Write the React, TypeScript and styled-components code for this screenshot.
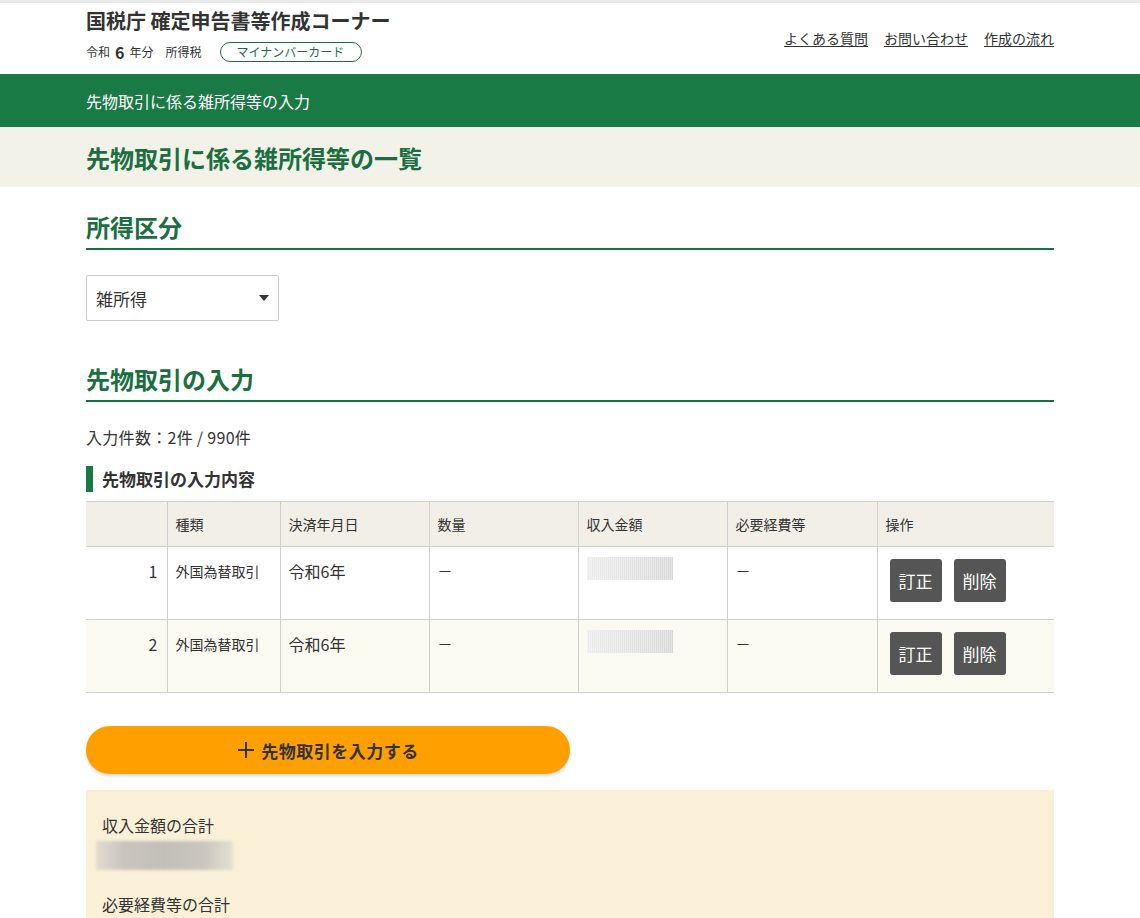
import styled, { createGlobalStyle } from "styled-components";

const Global = createGlobalStyle`
  html, body {
    margin: 0;
    padding: 0;
    background: #fff;
    color: #333;
    font-family: "Noto Sans CJK JP", "Noto Sans", sans-serif;
  }
`;

const Inner = styled.div`
  width: 968px;
  margin: 0 auto;
`;

const Header = styled.header`
  border-top: 3px solid #e8e8e8;
  height: 71px;
`;

const HeaderRow = styled(Inner)`
  display: flex;
  justify-content: space-between;
  align-items: flex-start;
`;

const Brand = styled.div`
  padding-top: 6px;
`;

const SiteTitle = styled.h1`
  margin: 0;
  font-size: 20px;
  line-height: 24px;
  font-weight: 700;
  color: #333;
`;

const Meta = styled.div`
  display: flex;
  align-items: center;
  margin-top: 9px;
  font-size: 12px;
  line-height: 20px;
`;

const Year = styled.span`
  font-size: 16px;
  font-weight: 700;
  margin: 0 5px;
`;

const Tax = styled.span`
  margin-left: 12px;
`;

const Pill = styled.span`
  margin-left: 18px;
  display: inline-block;
  width: 140px;
  height: 18px;
  line-height: 18px;
  border: 1px solid #1b6e42;
  border-radius: 10px;
  text-align: center;
  color: #1b6e42;
  font-size: 12px;
`;

const Links = styled.nav`
  display: flex;
  gap: 16px;
  padding-top: 25px;
`;

const Link = styled.a`
  color: #333;
  font-size: 14px;
  line-height: 20px;
  text-decoration: underline;
  text-underline-offset: 2px;
`;

const GreenBar = styled.div`
  background: #1a7a46;
  height: 53px;
  color: #fff;
  font-size: 16px;
  display: flex;
  align-items: center;
`;

const PageBand = styled.div`
  background: #f3f2e9;
  height: 60px;
  display: flex;
  align-items: center;
`;

const PageTitle = styled.h2`
  margin: 0;
  font-size: 24px;
  font-weight: 700;
  color: #1a6e40;
`;

const Section = styled.section`
  padding-top: ${(p: { $top: number }) => p.$top}px;
`;

const SectionTitle = styled.h3`
  margin: 0;
  font-size: 24px;
  font-weight: 700;
  color: #1a6e40;
  line-height: 28px;
  padding-bottom: 7px;
  border-bottom: 2px solid #1a6e40;
`;

const Select = styled.div`
  margin-top: 25px;
  width: 193px;
  height: 46px;
  box-sizing: border-box;
  border: 1px solid #ccc;
  border-radius: 2px;
  display: flex;
  align-items: center;
  justify-content: space-between;
  padding: 0 9px 0 9px;
  font-size: 17px;
  color: #333;
`;

const Caret = styled.span`
  width: 0;
  height: 0;
  border-left: 5px solid transparent;
  border-right: 5px solid transparent;
  border-top: 6px solid #333;
`;

const Count = styled.p`
  margin: 24px 0 0;
  font-size: 16px;
  line-height: 22px;
  letter-spacing: 0.3px;
`;

const SubTitle = styled.h4`
  margin: 18px 0 0;
  border-left: 7px solid #1a7a46;
  padding-left: 9px;
  font-size: 17px;
  font-weight: 700;
  line-height: 26px;
`;

const Table = styled.table`
  margin-top: 9px;
  width: 968px;
  border-collapse: collapse;
  font-size: 14px;
`;

const Th = styled.th<{ $w: number }>`
  width: ${(p) => p.$w}px;
  height: 45px;
  background: #f1efe6;
  border: 1px solid #cfcfcf;
  border-left: ${(p) => (p.$w === 81 ? "none" : "1px solid #cfcfcf")};
  border-right: ${(p) => (p.$w === 177 ? "none" : "1px solid #cfcfcf")};
  text-align: left;
  font-weight: 400;
  padding: 0 8px;
  box-sizing: border-box;
`;

const Tr = styled.tr<{ $alt?: boolean }>`
  background: ${(p) => (p.$alt ? "#fbfaf1" : "#fff")};
`;

const Td = styled.td<{ $size?: number; $right?: boolean }>`
  height: 59px;
  border: 1px solid #cfcfcf;
  vertical-align: top;
  padding: 13px 8px 0;
  font-size: ${(p) => p.$size ?? 14}px;
  text-align: ${(p) => (p.$right ? "right" : "left")};
  line-height: 22px;
  &:first-child {
    border-left: none;
    padding-right: 9px;
  }
  &:last-child {
    border-right: none;
    padding: 12px 12px 0;
  }
`;

const Masked = styled.div`
  width: 86px;
  height: 23px;
  margin-top: -3px;
  background:
    repeating-linear-gradient(90deg, rgba(255,255,255,0.35) 0 1px, transparent 1px 2px),
    linear-gradient(90deg, #ececec, #e1e1e1 60%, #d8d8d8);
`;

const Actions = styled.div`
  display: flex;
  gap: 12px;
`;

const ActionBtn = styled.button`
  width: 52px;
  height: 43px;
  border: none;
  border-radius: 3px;
  background: #555;
  color: #fff;
  font-family: inherit;
  font-size: 17px;
  padding: 0;
`;

const AddButton = styled.button`
  margin-top: 33px;
  width: 484px;
  height: 48px;
  border: none;
  border-radius: 24px;
  background: #ff9f00;
  box-shadow: 0 2px 3px rgba(0, 0, 0, 0.15);
  color: #333;
  font-family: inherit;
  font-size: 17px;
  font-weight: 700;
  letter-spacing: 0.5px;
  display: flex;
  align-items: center;
  justify-content: center;
  gap: 6px;
`;

const Summary = styled.div`
  margin-top: 16px;
  background: #faf0d7;
  padding: 24px 16px 0;
  height: 200px;
  box-sizing: border-box;
`;

const SumLabel = styled.div`
  font-size: 16px;
  line-height: 22px;
  margin-top: ${(p: { $top: number }) => p.$top}px;
`;

const BlurValue = styled.div`
  margin: 5px 0 0 -6px;
  width: 137px;
  height: 29px;
  background: linear-gradient(90deg, #e3ddcf 0%, #c9c5bd 20%, #c2bfb8 50%, #cbc7bf 80%, #e6e0d2 100%);
  filter: blur(1.5px);
`;

const cols = [
  { w: 81, label: "" },
  { w: 113, label: "種類" },
  { w: 149, label: "決済年月日" },
  { w: 149, label: "数量" },
  { w: 149, label: "収入金額" },
  { w: 150, label: "必要経費等" },
  { w: 177, label: "操作" },
];

const rows = [1, 2];

export default function App() {
  return (
    <>
      <Global />
      <Header>
        <HeaderRow>
          <Brand>
            <SiteTitle>国税庁 確定申告書等作成コーナー</SiteTitle>
            <Meta>
              令和<Year>6</Year>年分<Tax>所得税</Tax>
              <Pill>マイナンバーカード</Pill>
            </Meta>
          </Brand>
          <Links>
            <Link>よくある質問</Link>
            <Link>お問い合わせ</Link>
            <Link>作成の流れ</Link>
          </Links>
        </HeaderRow>
      </Header>
      <GreenBar>
        <Inner>先物取引に係る雑所得等の入力</Inner>
      </GreenBar>
      <PageBand>
        <Inner>
          <PageTitle>先物取引に係る雑所得等の一覧</PageTitle>
        </Inner>
      </PageBand>
      <Inner>
        <Section $top={26}>
          <SectionTitle>所得区分</SectionTitle>
          <Select>
            雑所得
            <Caret />
          </Select>
        </Section>
        <Section $top={44}>
          <SectionTitle>先物取引の入力</SectionTitle>
          <Count>入力件数：2件 / 990件</Count>
          <SubTitle>先物取引の入力内容</SubTitle>
          <Table>
            <thead>
              <tr>
                {cols.map((c, i) => (
                  <Th key={i} $w={c.w}>
                    {c.label}
                  </Th>
                ))}
              </tr>
            </thead>
            <tbody>
              {rows.map((n) => (
                <Tr key={n} $alt={n % 2 === 0}>
                  <Td $size={16} $right>
                    {n}
                  </Td>
                  <Td>外国為替取引</Td>
                  <Td $size={16}>令和6年</Td>
                  <Td $size={15}>－</Td>
                  <Td>
                    <Masked />
                  </Td>
                  <Td $size={15}>－</Td>
                  <Td>
                    <Actions>
                      <ActionBtn>訂正</ActionBtn>
                      <ActionBtn>削除</ActionBtn>
                    </Actions>
                  </Td>
                </Tr>
              ))}
            </tbody>
          </Table>
          <AddButton>
            <svg width="18" height="18" viewBox="0 0 18 18">
              <path d="M9 1v16M1 9h16" stroke="#333" strokeWidth="2" fill="none" />
            </svg>
            先物取引を入力する
          </AddButton>
          <Summary>
            <SumLabel $top={0}>収入金額の合計</SumLabel>
            <BlurValue />
            <SumLabel $top={23}>必要経費等の合計</SumLabel>
          </Summary>
        </Section>
      </Inner>
    </>
  );
}
